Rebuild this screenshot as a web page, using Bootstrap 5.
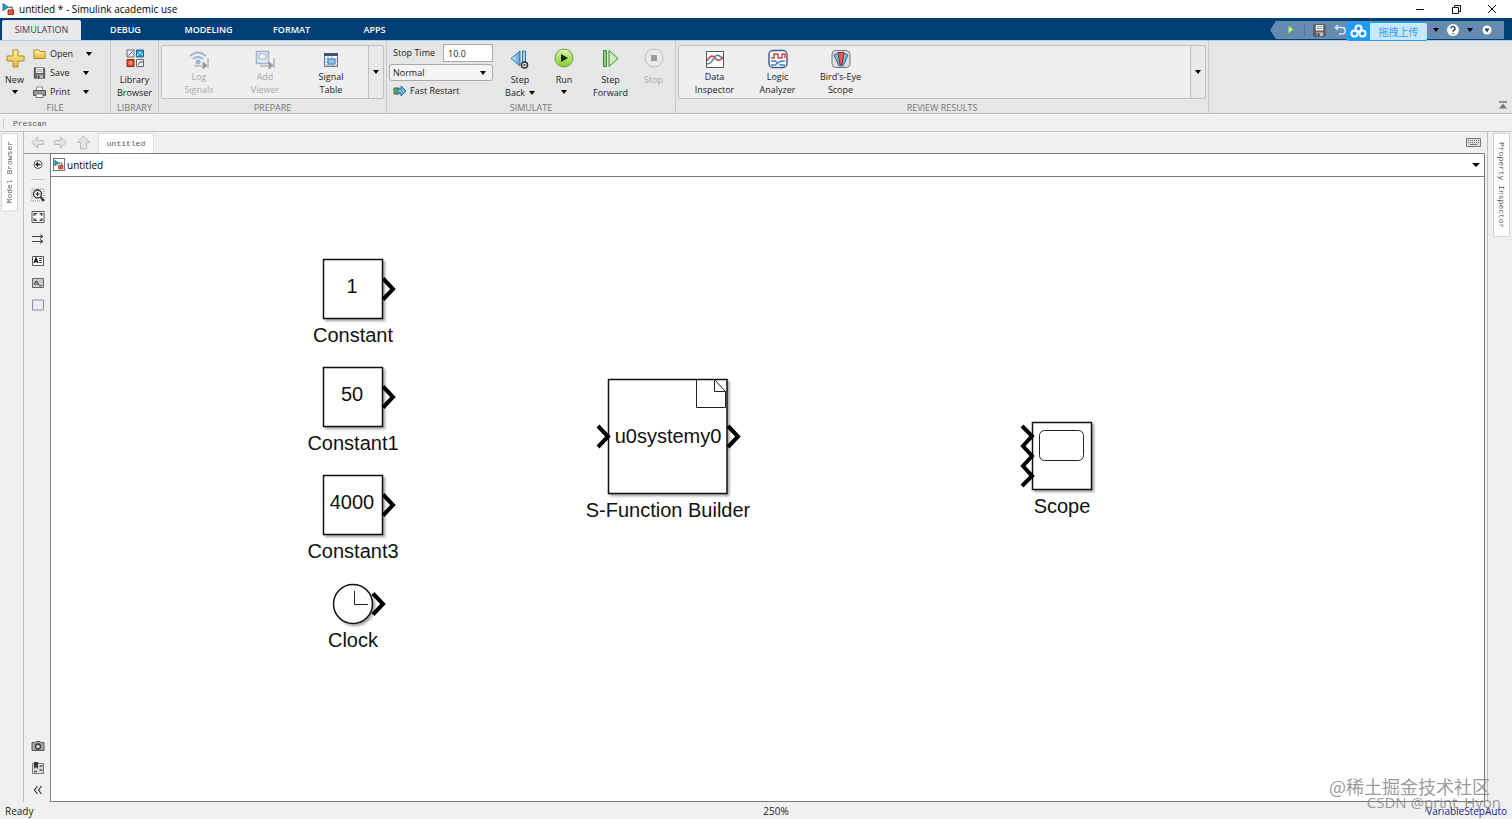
<!DOCTYPE html>
<html lang="en">
<head>
<meta charset="utf-8">
<meta name="viewport" content="width=device-width, initial-scale=1">
<title>untitled * - Simulink academic use</title>
<link href="https://cdn.jsdelivr.net/npm/bootstrap@5.3.0/dist/css/bootstrap.min.css" rel="stylesheet">
<style>
  body { font: 9px/12px "Open Sans", "Noto Sans", "Noto Sans CJK SC", sans-serif; color: #222; background: #f0f0f0; }
  button, input, select { font: inherit; color: inherit; }
  svg { display: block; flex: none; }
  .tool { border: 0; background: none; padding: 0; color: inherit; white-space: nowrap; }
  .tool:disabled { color: #aaa; }
  .tool:disabled svg { opacity: .45; }
  .caret { width: 0; height: 0; border: 3px solid transparent; border-top: 4px solid #000; border-bottom: 0; flex: none; }
  .song { font-family: "Liberation Mono", monospace; font-size: 8px; color: #555; }

  .titlebar { height: 18px; background: #fff; font-size: 10px; color: #000; padding-left: 2px; }
  .titlebar > svg { margin-right: 4px; }
  .window-controls { gap: 24px; padding-right: 14px; }

  .tabstrip { height: 22px; background: #003f75; padding: 2px 8px 0 2px; }
  .tabstrip .nav-link { height: 20px; padding: 0; color: #fff; font-weight: 600; line-height: 20px; border: 0; border-radius: 0; text-align: center; width: 83px; }
  .tabstrip .nav-link.active { width: 79px; margin-right: 3px; background: #e9e9e9; color: #444; font-weight: 400; border-radius: 2px 2px 0 0; }
  .quick { height: 18px; margin-top: 1px; background: #658bb1; padding: 0 10px 0 14px; clip-path: polygon(6px 0, 100% 0, 100% 100%, 6px 100%, 0 50%); width: 234px; }
  .quick .split { width: 1px; height: 12px; background: #4f759c; }
  .quick-help { gap: 7px; }
  .quick-wrap { position: relative; }
  .upload { position: absolute; left: 76px; top: 2px; height: 19px; width: 82px; border-radius: 3px; background: #c5e8fd; border: 1px solid #209df5; color: #3a9ff0; overflow: hidden; }
  .upload .cloud { width: 23px; background: #1e9cf5; align-self: stretch; }
  .cjk { font-family: "Noto Sans CJK SC", sans-serif; font-size: 10px; }

  .ribbon { height: 74px; background: #e6e6e6; border-top: 1px solid #b4cbe2; border-bottom: 1px solid #bdbdbd; }
  .group { height: 72px; border-right: 1px solid #cacaca; padding-top: 4px; }
  .group-body { height: 57px; }
  .group-name { color: #777; text-align: center; line-height: 11px; }
  .g-file { width: 111px; } .g-library { width: 48px; } .g-prepare { width: 228px; } .g-simulate { width: 289px; } .g-review { width: 533px; }
  .gallery { height: 54px; margin: 0 2px; border: 1px solid #bfbfbf; border-radius: 2px; background: #efefef; }
  .gallery-more { width: 15px; border: 0; border-left: 1px solid #bfbfbf; background: #e9e9e9; padding: 0; align-self: stretch; }
  .big { display: flex; flex-direction: column; align-items: center; line-height: 13px; }
  .big svg { margin-bottom: 3px; }
  .gallery .big svg { margin-bottom: 1px; }
  .w-prepare { width: 66px; } .w-review { width: 63px; }
  .new-btn { width: 29px; }
  .file-rows { padding-left: 4px; margin-top: -1px; }
  .file-rows .tool { width: 42px; }
  .row-tool { height: 19px; gap: 8px; }
  .row-tool:first-child { gap: 11px; }
  .field { height: 18px; width: 50px; border: 1px solid #aaa; background: #fff; padding: 0 4px; border-radius: 0; }
  .mode { appearance: none; height: 17px; width: 104px; border: 1px solid #aaa; border-radius: 3px; padding: 0 3px; background: #f4f4f4; line-height: 13px; }
  .mode-wrap { position: relative; width: 104px; margin-top: 2px; }
  .mode-wrap .caret { position: absolute; right: 7px; top: 7px; pointer-events: none; }
  .sim-settings { padding-left: 2px; margin-top: -1px; }
  .sim-run { padding: 3px 0 0 5px; }
  .sim-run .big { width: 44px; }
  .sim-run .big:nth-child(3) { width: 49px; }
  .sim-run .big:nth-child(4) { width: 37px; }

  .favorites { height: 18px; border-bottom: 1px solid #c4c4c4; line-height: 17px; padding-left: 3px; border-top: 1px solid #f8f8f8; }
  .favorites span { border-left: 1px solid #ccc; padding-left: 9px; line-height: 11px; }
  .rail { width: 24px; border-right: 1px solid #bfbfbf; padding: 1px 0 0 1px; }
  .rail-right { width: 25px; border-left: 1px solid #bfbfbf; padding: 1px 0 0 5px; margin-left: 2px; }
  .side-tab { width: 17px; background: #fff; border: 1px solid #d5d5d5; writing-mode: vertical-rl; padding: 8px 0; text-align: start; line-height: 15px; color: #555; }
  .side-tab.flip { transform: rotate(180deg); padding: 7px 0; }
  .docbar { height: 21px; padding-left: 6px; }
  .doc-tab { height: 20px; margin-left: 7px; width: 56px; background: #fff; border: 1px solid #dcdcdc; border-bottom: 0; }
  .palette { width: 26px; border-top: 1px solid #9c9c9c; padding: 4px 0 5px 2px; }
  .palette hr { width: 14px; margin: 0; border-top: 1px solid #555; }
  .palette-set { gap: 8px; }
  .address { height: 24px; border: 1px solid #7c7c7c; background: #fff; font-size: 10px; padding: 0 4px 1px 2px; color: #000; }
  .address .caret { border-width: 4px 4px 0; }
  .address span { margin-left: 2px; }
  .sheet { position: relative; background: #fff; border: 1px solid #7c7c7c; border-top: 0; overflow: hidden; }
  .status { height: 17px; font-size: 10px; line-height: 18px; padding: 0 5px; color: #222; }
  .status > * { flex: 1 1 0; }
  .status .zoom-level { flex: none; padding-left: 40px; }
  .solver { color: #1a1a9c; }

  .node { position: absolute; display: flex; flex-direction: column; align-items: center; width: 200px; font: 20px/24px "Liberation Sans", Arial, sans-serif; color: #111; }
  .node svg { overflow: visible; }
  .node text { font: 20px "Liberation Sans", Arial, sans-serif; text-anchor: middle; fill: #111; }
  .n-constant { left: 202px; top: 82px; }
  .n-constant1 { left: 202px; top: 190px; }
  .n-constant3 { left: 202px; top: 298px; }
  .n-clock { left: 202px; top: 407px; }
  .n-builder { left: 517px; top: 202px; }
  .n-scope { left: 911px; top: 245px; }
  .block { fill: #fff; stroke: #111; stroke-width: 1.5; filter: drop-shadow(2px 2px 1px #0005); }
  .port { fill: none; stroke: #000; stroke-width: 4; }
  .thin { fill: none; stroke: #222; stroke-width: 1; }
  .watermark { position: absolute; right: 11px; bottom: 9px; text-align: right; font: 18px/18px "Noto Sans CJK SC", sans-serif; color: #808080cc; white-space: nowrap; pointer-events: none; }
  .watermark .csdn { font: 15px/15px "Open Sans", sans-serif; }
  .watermark .juejin { padding-right: 11px; }
</style>
</head>
<body class="vh-100 d-flex flex-column overflow-hidden position-relative">

<svg width="0" height="0" class="position-absolute">
  <defs>
    <linearGradient id="gold" x2="0" y2="1"><stop stop-color="#fff6a8"/><stop offset="1" stop-color="#e8b62c"/></linearGradient>
    <linearGradient id="lime" x2="0" y2="1"><stop stop-color="#d8f7a4"/><stop offset="1" stop-color="#7fd02c"/></linearGradient>
    <linearGradient id="sky" x2="1"><stop stop-color="#d5effc"/><stop offset="1" stop-color="#4fa0d4"/></linearGradient>
    <symbol id="model" viewBox="0 0 14 14"><path d="M1 1v8l6-4z" fill="#1d9ac4" stroke="#23617d" stroke-width=".8"/><path d="M7 5h4v3" fill="none" stroke="#333"/><path d="M6.500 8h6v5h-6z" fill="#e05a36" stroke="#8f2e18"/></symbol>
    <symbol id="floppy" viewBox="0 0 14 14"><path d="M1 1h11l1 1v11H1z" fill="#666" stroke="#444"/><path d="M3 1h8v6H3z" fill="#f2f2f2"/><path d="M4 3h6M4 5h6" stroke="#999"/><path d="M4 9h7v4H4z" fill="#bbb"/><path d="M5 10h2v3H5z" fill="#333"/></symbol>
    <symbol id="arrow" viewBox="0 0 14 13"><path d="M1 6.500 7 1v3.500h6v4H7V12z" fill="#e4e4e4" stroke="#bdbdbd"/></symbol>
  </defs>
</svg>

<header>
  <div class="titlebar d-flex align-items-center">
    <svg width="13" height="14"><use href="#model"/></svg>
    <span>untitled * - Simulink academic use</span>
    <div class="window-controls d-flex ms-auto">
      <button class="tool" aria-label="Minimize"><svg width="12" height="12"><path d="M2 6.500h8" stroke="#111"/></svg></button>
      <button class="tool" aria-label="Restore"><svg width="12" height="12"><path d="M2.500 4.500h6v6h-6zM4.500 4V2.500h6v6H9" fill="none" stroke="#111"/></svg></button>
      <button class="tool" aria-label="Close"><svg width="12" height="12"><path d="m2 2 8 8M10 2l-8 8" stroke="#111"/></svg></button>
    </div>
  </div>

  <div class="tabstrip d-flex">
    <nav class="nav flex-nowrap">
      <a class="nav-link active" href="#">SIMULATION</a>
      <a class="nav-link" href="#">DEBUG</a>
      <a class="nav-link" href="#">MODELING</a>
      <a class="nav-link" href="#">FORMAT</a>
      <a class="nav-link" href="#">APPS</a>
    </nav>
    <div class="quick-wrap ms-auto">
      <div class="quick d-flex align-items-center">
        <button class="tool" aria-label="Run"><svg width="12" height="12"><path d="M1.500 1v9M4 1v9l6-4.500z" fill="#c8e8b0" stroke="#5aa040"/></svg></button>
        <span class="split ms-2"></span>
        <button class="tool ms-2" aria-label="Save"><svg width="13" height="13"><use href="#floppy"/></svg></button>
        <button class="tool ms-2" aria-label="Undo"><svg width="13" height="12"><path d="M4 1 1.500 3.500 4 6M2 3.500h6a3 3 0 0 1 0 6.500H5" fill="none" stroke="#d5e3f0" stroke-width="1.500"/></svg></button>
        <div class="quick-help d-flex align-items-center ms-auto">
          <button class="tool caret" aria-label="More"></button>
          <button class="tool" aria-label="Help"><svg width="14" height="14"><circle cx="7" cy="7" r="6" fill="#fff"/><path d="M5 5.500a2 2 0 1 1 3 1.600q-1 .6-1 1.600M7 10v1.200" fill="none" stroke="#234" stroke-width="1.400"/></svg></button>
          <button class="tool caret" aria-label="Help menu"></button>
          <button class="tool" aria-label="Options"><svg width="14" height="12"><circle cx="7" cy="6" r="4.500" fill="#fff"/><path d="M4.500 4.500h5L7 8.500z" fill="#123a6a"/></svg></button>
        </div>
      </div>
      <button class="upload tool d-flex align-items-center">
        <span class="cloud d-flex align-items-center justify-content-center"><svg width="17" height="15" fill="none" stroke="#fff" stroke-width="2"><circle cx="8.500" cy="4.500" r="3"/><circle cx="4.500" cy="9.500" r="3"/><circle cx="12.500" cy="9.500" r="3"/></svg></span>
        <span class="cjk flex-grow-1">拖拽上传</span>
      </button>
    </div>
  </div>

  <div class="ribbon d-flex">
    <section class="group g-file">
      <div class="group-body d-flex">
        <button class="tool big new-btn">
          <svg width="20" height="25"><path d="M8 5h5v6h6v5h-6v6H8v-6H2v-5h6z" fill="url(#gold)" stroke="#b08a28"/></svg>
          New<span class="caret mt-1"></span>
        </button>
        <div class="file-rows">
          <div class="row-tool d-flex align-items-center"><button class="tool d-flex gap-1"><svg width="13" height="12"><path d="M1 2h5l1 1.500h5v7H1z" fill="url(#gold)" stroke="#a98a38"/></svg>Open</button><span class="caret"></span></div>
          <div class="row-tool d-flex align-items-center"><button class="tool d-flex gap-1"><svg width="13" height="12"><use href="#floppy"/></svg>Save</button><span class="caret"></span></div>
          <div class="row-tool d-flex align-items-center"><button class="tool d-flex gap-1"><svg width="13" height="12"><path d="M3.500 1h6v4h-6z" fill="#fff" stroke="#888"/><path d="M.5 4.500h12v5H.5z" fill="#999" stroke="#555"/><path d="M3 8h7v3.500H3z" fill="#fff" stroke="#777"/></svg>Print</button><span class="caret"></span></div>
        </div>
      </div>
      <div class="group-name">FILE</div>
    </section>

    <section class="group g-library">
      <div class="group-body">
        <button class="tool big mx-auto">
          <svg width="20" height="25"><path d="M2 5h7v7H2zM11.500 14.500h7v7h-7z" fill="#eee" stroke="#667"/><path d="M3.500 10.500l4-4M13 20l2-3h3" fill="none" stroke="#555"/><path d="M11.500 5h7v7h-7z" fill="#2b9fd0" stroke="#1c6a93"/><path d="m12 11 3-4 3 3" fill="none" stroke="#d5effc"/><path d="M2 14.500h7v7H2z" fill="#dd4b22" stroke="#8e2a10"/><circle cx="5.500" cy="18" r="2" fill="#f09070"/></svg>
          <span>Library<br>Browser</span>
        </button>
      </div>
      <div class="group-name">LIBRARY</div>
    </section>

    <section class="group g-prepare">
      <div class="group-body">
        <div class="gallery d-flex">
          <button class="tool big w-prepare ms-1" disabled><svg width="20" height="23"><path d="M1 10q8-7 16 0M4 13q5-4 10 0" fill="none" stroke="#3b6fa8" stroke-width="2"/><circle cx="9" cy="16" r="2.500" fill="#3b6fa8"/><path d="M5 20h8M14 16v7l4-3.500zM19 12v10" fill="#333" stroke="#333"/></svg><span>Log<br>Signals</span></button>
          <button class="tool big w-prepare" disabled><svg width="20" height="23"><path d="M1.500 5.500h12v12h-12z" fill="#d5e4f4" stroke="#3b6fa8" stroke-width="1.500"/><path d="M4 8h7v5H4z" fill="#fff" stroke="#3b6fa8"/><path d="M5 20h8M14 16v7l4-3.500zM19 12v10" fill="#333" stroke="#333"/></svg><span>Add<br>Viewer</span></button>
          <button class="tool big w-prepare"><svg width="16" height="23"><path d="M1.500 7.500h13v13h-13z" fill="#fff" stroke="#6b7686"/><path d="M1 7h14v3H1z" fill="#3f5370"/><path d="M2 13h12M2 16h12M2 19h12M5 10v10M9 10v10" stroke="#9aa7b8"/><path d="M5 13h7v5H5z" fill="#8ac6f2" stroke="#3b83bd"/></svg><span>Signal<br>Table</span></button>
          <button class="gallery-more ms-auto d-flex align-items-center justify-content-center" aria-label="More"><span class="caret"></span></button>
        </div>
      </div>
      <div class="group-name">PREPARE</div>
    </section>

    <section class="group g-simulate">
      <div class="group-body d-flex">
        <div class="sim-settings d-flex flex-column">
          <div class="d-flex align-items-center justify-content-between"><label class="ps-1" for="stop-time">Stop Time</label><input class="field" id="stop-time" value="10.0"></div>
          <div class="mode-wrap"><select class="mode d-block" aria-label="Simulation mode"><option>Normal</option></select><span class="caret"></span></div>
          <button class="tool d-flex gap-1 align-items-center mt-1 ps-1"><svg width="13" height="12"><path d="M1 3h5v6H1z" fill="#62b657" stroke="#3b6f38"/><path d="M4 4h4V1l5 5-5 5V8H4z" fill="#6fb2dc" stroke="#2f6a92"/></svg>Fast Restart</button>
        </div>
        <div class="sim-run d-flex">
          <button class="tool big"><svg width="22" height="22"><path d="M11 3v15L2 10.500z" fill="url(#sky)" stroke="#3277a8"/><path d="M13.500 3h3v14h-3z" fill="#a5d4ef" stroke="#3277a8"/><circle cx="15.500" cy="17" r="3" fill="#eee" stroke="#333" stroke-width="1.500"/><circle cx="15.500" cy="17" r="1" fill="#333"/></svg><span>Step</span><span class="d-flex align-items-center gap-1">Back <i class="caret"></i></span></button>
          <button class="tool big"><svg width="20" height="22"><circle cx="10" cy="10" r="9" fill="url(#lime)" stroke="#6f9a50"/><path d="M7 6v8l7-4z" fill="#222"/></svg>Run<span class="caret mt-1"></span></button>
          <button class="tool big"><svg width="20" height="22"><path d="M2.500 2.500h3v16h-3z" fill="#8fd07a" stroke="#45803a"/><path d="M8 2.500v16l9-8z" fill="#cdf0b8" stroke="#45803a"/></svg><span>Step<br>Forward</span></button>
          <button class="tool big" disabled><svg width="20" height="22"><circle cx="10" cy="10" r="9" fill="#eee" stroke="#888"/><path d="M7 7h6v6H7z" fill="#444"/></svg>Stop</button>
        </div>
      </div>
      <div class="group-name">SIMULATE</div>
    </section>

    <section class="group g-review">
      <div class="group-body">
        <div class="gallery d-flex">
          <button class="tool big w-review ms-1"><svg width="18" height="23"><path d="M.5 5.500h17v16H.5z" fill="#fff" stroke="#555"/><path d="M1 18q4 0 7-6t9 1" fill="none" stroke="#3b83bd" stroke-width="1.500"/><path d="M1 15q4-8 8-3t8-1" fill="none" stroke="#d2403c" stroke-width="1.500"/></svg><span>Data<br>Inspector</span></button>
          <button class="tool big w-review"><svg width="20" height="23"><rect x="1" y="4.500" width="18" height="17" rx="4" fill="#fff" stroke="#3a568a" stroke-width="1.400"/><path d="M3 12h3V8h4v4h4V8h3v4" fill="none" stroke="#d2403c" stroke-width="1.400"/><path d="M3 15h4l6 4h4M3 19h4l6-4h4" fill="none" stroke="#3b83bd" stroke-width="1.300"/></svg><span>Logic<br>Analyzer</span></button>
          <button class="tool big w-review"><svg width="20" height="23"><rect x="1" y="4.500" width="18" height="17" rx="4" fill="#e0e0e0" stroke="#777"/><path d="M3 9q7-5 14 0l-5 11H8z" fill="#6fbbe8" stroke="#2f6a92"/><path d="M7 6.500h6l-2 12H9z" fill="#e06050" stroke="#8f2e28"/></svg><span>Bird's-Eye<br>Scope</span></button>
          <button class="gallery-more ms-auto d-flex align-items-center justify-content-center" aria-label="More"><span class="caret"></span></button>
        </div>
      </div>
      <div class="group-name">REVIEW RESULTS</div>
    </section>
    <button class="tool ms-auto align-self-end me-1 mb-1" aria-label="Collapse ribbon"><svg width="10" height="8"><path d="M1 1h8" stroke="#777" stroke-width="1.500"/><path d="m1 7.500 4-5 4 5z" fill="#777"/></svg></button>
  </div>
  <div class="favorites song d-flex align-items-center"><span>Prescan</span></div>
</header>

<main class="d-flex flex-grow-1">
  <div class="rail"><button class="side-tab song flip">Model Browser</button></div>
  <div class="flex-grow-1 d-flex flex-column">
    <div class="docbar d-flex align-items-center">
      <button class="tool" aria-label="Back"><svg width="15" height="13"><use href="#arrow"/></svg></button>
      <button class="tool ms-2" aria-label="Forward"><svg width="15" height="13"><g transform="translate(15 0) scale(-1 1)"><use href="#arrow" width="15" height="13"/></g></svg></button>
      <button class="tool ms-2" aria-label="Up"><svg width="15" height="15"><path d="M7.500 1 14 7.500h-3.500V14h-6V7.500H1z" fill="#e4e4e4" stroke="#bdbdbd"/></svg></button>
      <a class="doc-tab song d-flex align-items-center justify-content-center align-self-end text-decoration-none" href="#">untitled</a>
      <button class="tool ms-auto me-1" aria-label="Keyboard"><svg width="15" height="9"><path d="M.5.5h14v8H.5z" fill="#ddd" stroke="#777"/><path d="M2 2.500h11M2 4.500h11" stroke="#777" stroke-dasharray="1 1"/><path d="M4 6.500h7" stroke="#777"/></svg></button>
    </div>
    <div class="d-flex flex-grow-1">
      <div class="palette d-flex flex-column align-items-center">
        <button class="tool" aria-label="Hide browser"><svg width="14" height="13"><circle cx="7" cy="6.500" r="4" fill="#fff" stroke="#555"/><path d="M9.500 6.500H5M7 4.500l-2 2 2 2" fill="none" stroke="#222" stroke-width="1.300"/></svg></button>
        <hr class="mt-2">
        <div class="palette-set d-flex flex-column mt-2">
          <button class="tool" aria-label="Zoom"><svg width="14" height="14"><path d="M1 1h12v12H1z" fill="none" stroke="#888" stroke-dasharray="1 1"/><circle cx="6.500" cy="6" r="4" fill="#eee" stroke="#333" stroke-width="1.300"/><path d="M4.500 6h4M6.500 4v4" stroke="#222"/><path d="m9.500 9 3.500 4" stroke="#333" stroke-width="2"/></svg></button>
          <button class="tool" aria-label="Fit to view"><svg width="14" height="14"><path d="M1 1.500h12v11H1z" fill="#fff" stroke="#555"/><path d="M3 6V3.500h3M8.500 3.500H11V6M11 8v2.500H8.500M6 10.500H3V8M3 3.500l2 2M11 3.500l-2 2M3 10.500l2-2M11 10.500l-2-2" fill="none" stroke="#333"/></svg></button>
          <button class="tool" aria-label="Signal"><svg width="14" height="14"><path d="M1 4.500h11M1 9.500h11M9 2.500l3 2-3 2M9 7.500l3 2-3 2" fill="none" stroke="#444"/></svg></button>
          <button class="tool" aria-label="Annotation"><svg width="14" height="14"><path d="M1.500 2.500h11v9h-11z" fill="#fff" stroke="#555"/><path d="m3 9 2-5 2 5M4 7.500h2" fill="none" stroke="#111" stroke-width="1.300"/><path d="M8 4.500h3M8 6.500h3M8 8.500h3" stroke="#444"/></svg></button>
          <button class="tool" aria-label="Image"><svg width="14" height="14"><path d="M1.500 2.500h11v9h-11z" fill="#ccc" stroke="#666"/><path d="M3 9q2-7 4-2t4 2" fill="#888" stroke="#555"/></svg></button>
          <button class="tool" aria-label="Area"><svg width="14" height="14"><path d="M1.500 2h11v10h-11z" fill="#ececfb" stroke="#8890a8"/></svg></button>
        </div>
        <div class="palette-set d-flex flex-column mt-auto">
          <button class="tool" aria-label="Screenshot"><svg width="14" height="14"><path d="M1 3.500h3l1-1h4l1 1h3v8H1z" fill="#aaa" stroke="#555"/><circle cx="7" cy="7.500" r="2.500" fill="#ddd" stroke="#333" stroke-width="1.300"/></svg></button>
          <button class="tool" aria-label="Bookmarks"><svg width="14" height="14"><path d="M1.500 2.500h11v10h-11z" fill="#ddd" stroke="#777"/><path d="M3 1h4v7L5 6 3 8z" fill="#333"/><path d="M8.500 5h3M8.500 9h3M3 10.500h3" stroke="#555" stroke-width="1.500"/></svg></button>
          <button class="tool" aria-label="Collapse palette"><svg width="14" height="14"><path d="M6.500 3 3.500 7l3 4M10.500 3l-3 4 3 4" fill="none" stroke="#333" stroke-width="1.200"/></svg></button>
        </div>
      </div>
      <div class="flex-grow-1 d-flex flex-column">
        <div class="address d-flex align-items-center">
          <svg width="12" height="13" class="border border-secondary"><use href="#model"/></svg>
          <span>untitled</span>
          <button class="tool caret ms-auto" aria-label="Model path"></button>
        </div>
        <div class="sheet flex-grow-1">
          <div class="node n-constant"><svg width="60" height="60"><path class="block" d="M.5.500h59v59H.5z"/><path class="port" d="M60 19.500 70 30 60 40.500"/><text x="29" y="34">1</text></svg><span class="mt-1">Constant</span></div>
          <div class="node n-constant1"><svg width="60" height="60"><path class="block" d="M.5.500h59v59H.5z"/><path class="port" d="M60 19.500 70 30 60 40.500"/><text x="29" y="34">50</text></svg><span class="mt-1">Constant1</span></div>
          <div class="node n-constant3"><svg width="60" height="60"><path class="block" d="M.5.500h59v59H.5z"/><path class="port" d="M60 19.500 70 30 60 40.500"/><text x="29" y="34">4000</text></svg><span class="mt-1">Constant3</span></div>
          <div class="node n-clock"><svg width="40" height="40"><circle class="block" cx="20" cy="20" r="19.500"/><path class="port" d="M40 9.500 50 20 40 30.500"/><path class="thin" d="M21.500 7v13.500H35"/></svg><span class="mt-1">Clock</span></div>
          <div class="node n-builder"><svg width="120" height="115"><path class="block" d="M.5.500h118.500v114H.5z"/><path class="port" d="M-10 47 0 57.500-10 68M120 47l10 10.500L120 68"/><path class="thin" d="M88.500.500v28h29V12.500L106.500.500v12h11"/><text x="60" y="64">u0systemy0</text></svg><span class="mt-1">S-Function Builder</span></div>
          <div class="node n-scope"><svg width="60" height="68"><path class="block" d="M.5.500h59v67H.5z"/><path class="port" d="m-10 4 10 10-9 10 9 10-9 10 9 10-10 10"/><rect class="thin" x="7.500" y="8.500" width="44" height="30" rx="5"/></svg><span class="mt-1">Scope</span></div>
        </div>
      </div>
    </div>
  </div>
  <div class="rail-right"><button class="side-tab song">Property Inspector</button></div>
</main>

<footer class="status d-flex">
  <span>Ready</span>
  <span class="zoom-level">250%</span>
  <a class="solver text-decoration-none text-end" href="#">VariableStepAuto</a>
</footer>
<div class="watermark"><div class="juejin">@稀土掘金技术社区</div><div class="csdn">CSDN @print_Hyon</div></div>

<script src="https://cdn.jsdelivr.net/npm/bootstrap@5.3.0/dist/js/bootstrap.bundle.min.js"></script>
</body>
</html>
